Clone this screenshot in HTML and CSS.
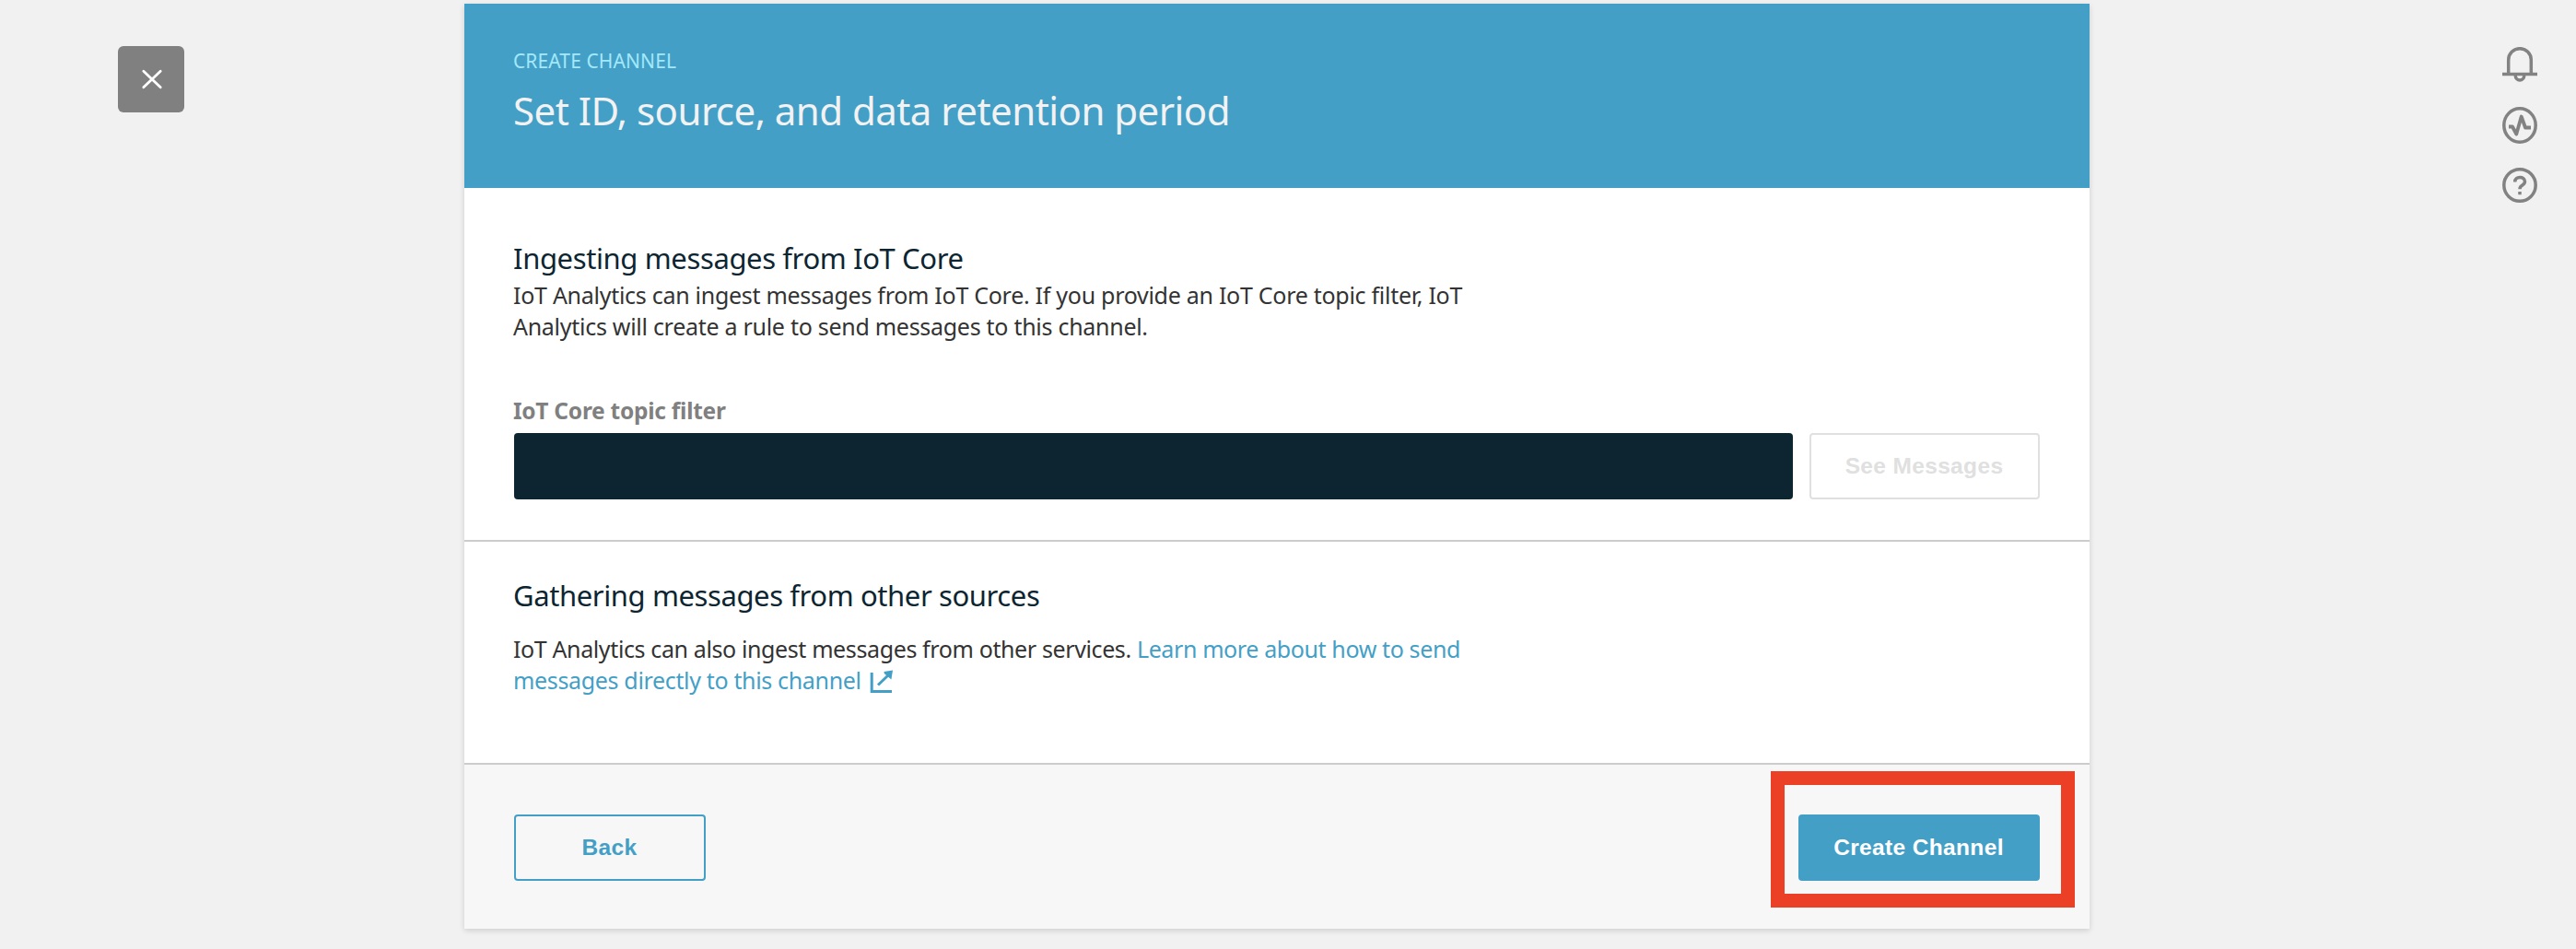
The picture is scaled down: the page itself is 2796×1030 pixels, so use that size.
FILE: index.html
```html
<!DOCTYPE html>
<html lang="en">
<head>
<meta charset="utf-8">
<title>Create channel</title>
<link rel="stylesheet" href="styles.css">
</head>
<body>
<div class="page">
  <aside class="left">
    <button class="close" aria-label="Close">
      <svg width="24" height="24" viewBox="0 0 24 24"><path d="M2.8 3.2 21.2 20.8M21.2 3.2 2.8 20.8"/></svg>
    </button>
  </aside>
  <main class="card">
    <header class="card-header">
      <p class="kicker">CREATE CHANNEL</p>
      <h1 class="title">Set ID, source, and data retention period</h1>
    </header>
    <section class="ingest">
      <h2 class="heading">Ingesting messages from IoT Core</h2>
      <p class="text">IoT Analytics can ingest messages from IoT Core. If you provide an IoT Core topic filter, IoT<br>Analytics will create a rule to send messages to this channel.</p>
      <label class="label" for="topic">IoT Core topic filter</label>
      <div class="field-row">
        <input class="field" id="topic" type="text">
        <button class="btn btn-disabled">See Messages</button>
      </div>
    </section>
    <section class="gather">
      <h2 class="heading heading-gather">Gathering messages from other sources</h2>
      <p class="text text-gather">IoT Analytics can also ingest messages from other services. <a class="link">Learn more about how to send<br><span class="link-tail">messages directly to this channel</span><svg class="external" width="26" height="26" viewBox="0 0 26 26"><path class="line" d="M2.2 3V23.6H24M9 16.5 20 6"/><path class="tip" d="M15.5 2 25 .5 23.4 10.5 15.8 4Z"/></svg></a></p>
    </section>
    <footer class="card-footer">
      <button class="btn btn-outline">Back</button>
      <div class="primary-wrap">
        <button class="btn btn-primary">Create Channel</button>
        <span class="highlight"></span>
      </div>
    </footer>
  </main>
  <aside class="right">
    <svg class="icon" width="38" height="38" viewBox="0 0 38 38"><path d="M6.7 29V14a12.3 12.3 0 0 1 24.6 0V29M0 29.5H38M14.3 30.5v.8a4.7 4.7 0 0 0 9.4 0v-.8"/></svg>
    <svg class="icon" width="38" height="40" viewBox="0 0 38 40"><ellipse cx="19" cy="20" rx="17.2" ry="18.2"/><path class="pulse" d="M7 21.5H11L15.3 29.5 20.7 10.5 25 22.5H31"/></svg>
    <svg class="icon icon-help" width="38" height="38" viewBox="0 0 38 38"><circle cx="19" cy="19" r="17.2"/><path d="M13.7 15.5C13.7 8.7 24.5 8.9 24.5 15c0 4.6-5.5 3.4-5.5 8.2M19 26v3.3"/></svg>
  </aside>
</div>
</body>
</html>
```
FILE: styles.css
```css
* { box-sizing: border-box; }

body {
  margin: 0;
  background: #f1f1f1;
  font-family: "Noto Sans", "Open Sans", sans-serif;
}

h1, h2, p { margin: 0; font-weight: 400; }

button, input { margin: 0; font: inherit; }

.page {
  display: grid;
  grid-template-columns: 504px 1764px 1fr;
  height: 1030px;
  overflow: hidden;
}

.left { padding: 50px 0 0 128px; }

.close {
  display: flex;
  align-items: center;
  justify-content: center;
  width: 72px;
  height: 72px;
  padding: 0 0 0 2px;
  border: 0;
  border-radius: 6px;
  background: #808080;
}

.close svg {
  fill: none;
  stroke: #fff;
  stroke-width: 2.8;
  stroke-linecap: round;
}

.card {
  display: flex;
  flex-direction: column;
  height: 1004px;
  margin-top: 4px;
  background: #fff;
  box-shadow: 0 2px 6px rgba(0, 0, 0, 0.15);
}

.card-header {
  height: 200px;
  padding: 47px 53px 0;
  background: #449fc6;
}

.kicker {
  margin-bottom: 12px;
  color: #a2e8fb;
  font-size: 21px;
  line-height: 30px;
  letter-spacing: 0.1px;
}

.title {
  color: #f2f2f2;
  font-size: 42px;
  line-height: 54px;
  letter-spacing: -0.53px;
}

.ingest {
  height: 384px;
  padding: 56px 54px 0 53px;
  border-bottom: 2px solid #ccc;
}

.gather {
  height: 240px;
  padding: 38px 54px 0 53px;
}

.heading {
  color: #0c2531;
  font-size: 31px;
  line-height: 40px;
  letter-spacing: -0.38px;
}

.heading-gather { letter-spacing: -0.4px; }

.text {
  margin-top: 3px;
  color: #333;
  font-size: 25px;
  line-height: 34px;
  letter-spacing: -0.28px;
}

.text-gather {
  margin-top: 21px;
  letter-spacing: -0.38px;
}

.link { color: #449fc6; }

.link-tail { letter-spacing: -0.34px; }

.external {
  margin-left: 9px;
  vertical-align: -5px;
}

.external .line {
  fill: none;
  stroke: #449fc6;
  stroke-width: 3;
}

.external .tip { fill: #449fc6; }

.label {
  display: block;
  margin: 58px 0 7px;
  color: #808080;
  font-size: 24.5px;
  font-weight: 700;
  line-height: 34px;
  letter-spacing: -0.25px;
}

.field-row {
  display: flex;
  gap: 18px;
  padding-left: 1px;
}

.field {
  flex: 1;
  height: 72px;
  border: 0;
  border-radius: 4px;
  background: #0c2531;
}

.btn {
  height: 72px;
  padding: 0 1px 0 0;
  border: 2px solid #449fc6;
  border-radius: 4px;
  font: 700 24.5px/1 "Liberation Sans", Arial, sans-serif;
  letter-spacing: 0.35px;
}

.btn-disabled {
  width: 250px;
  border-color: #e0e0e0;
  background: #fff;
  color: #e0e0e0;
}

.btn-outline {
  width: 208px;
  background: transparent;
  color: #449fc6;
}

.btn-primary {
  width: 262px;
  background: #449fc6;
  color: #fff;
}

.card-footer {
  display: flex;
  flex: 1;
  align-items: flex-start;
  justify-content: space-between;
  padding: 54px 54px 0;
  border-top: 2px solid #ccc;
  background: #f7f7f7;
}

.primary-wrap { position: relative; }

.highlight {
  position: absolute;
  top: -47px;
  left: -30px;
  width: 330px;
  height: 148px;
  border: 15px solid #ec4026;
}

.right {
  display: flex;
  flex-direction: column;
  align-items: flex-end;
  gap: 27px;
  padding: 51px 42px 0 0;
}

.icon {
  fill: none;
  stroke: #828282;
  stroke-width: 3.5;
}

.icon-help { margin-top: -1px; }

.icon .pulse { stroke-width: 3.8; stroke-linejoin: round; }
```
